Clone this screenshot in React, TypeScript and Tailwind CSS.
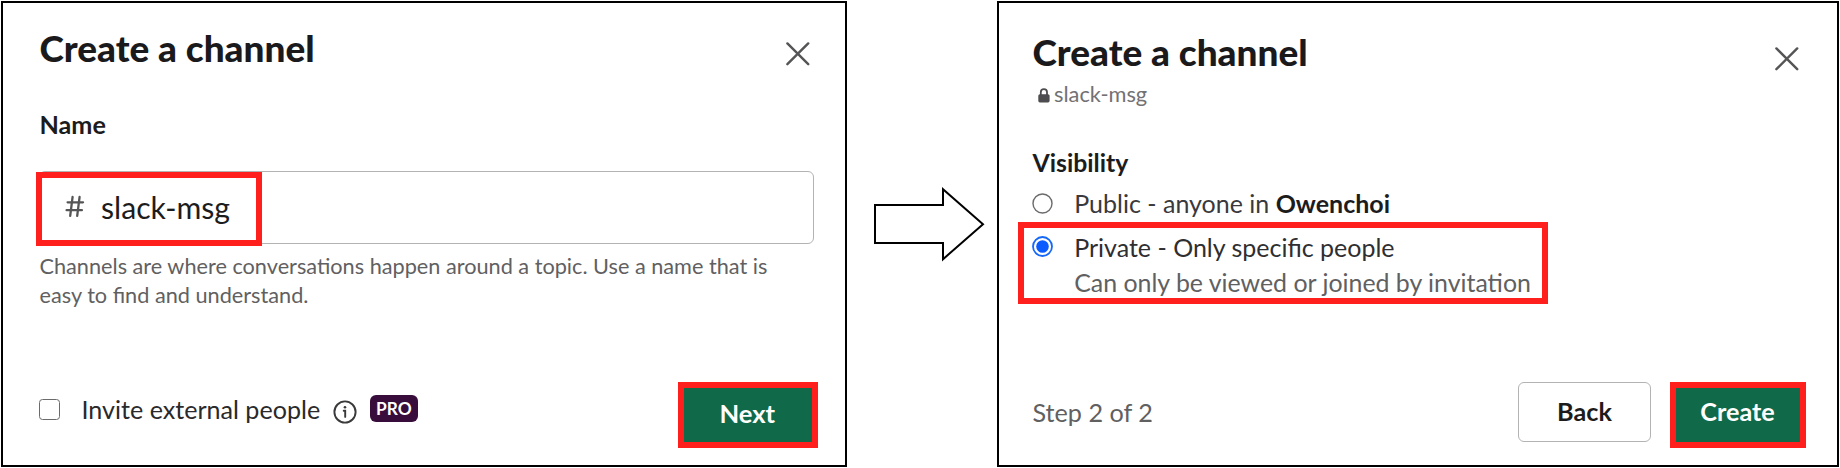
import type { ReactNode } from 'react';

function CloseIcon() {
  return (
    <svg width="24" height="24" viewBox="0 0 24 24" fill="none" stroke="#555456" strokeWidth="2.4" strokeLinecap="round">
      <path d="M1.4 1.4 22.2 22.2M22.2 1.4 1.4 22.2" />
    </svg>
  );
}

function HashIcon() {
  return (
    <svg width="20" height="23" viewBox="0 0 20 23" fill="none" stroke="#555456" strokeWidth="2.3" strokeLinecap="round">
      <path d="M7.6 1.8 5.2 20.8M14.6 1.8 12.2 20.8M2.6 7.3H18M1.6 15.2H16.9" />
    </svg>
  );
}

function InfoIcon() {
  return (
    <svg width="24" height="24" viewBox="0 0 24 24" fill="none" stroke="#3a393b" strokeWidth="1.9" strokeLinecap="round">
      <circle cx="12" cy="12" r="10.6" />
      <path d="M10.7 10.7h1.5v6.2" />
      <circle cx="12" cy="7.2" r="1.3" fill="#3a393b" stroke="none" />
    </svg>
  );
}

function LockIcon() {
  return (
    <svg width="12" height="15" viewBox="0 0 12 15">
      <path d="M2.8 7V4.2a3.1 3.1 0 0 1 6.2 0V7" fill="none" stroke="#4d4c4e" strokeWidth="1.8" />
      <rect x="0.3" y="6.2" width="11.3" height="8.2" rx="1.6" fill="#4d4c4e" />
    </svg>
  );
}

function Radio({ checked = false }: { checked?: boolean }) {
  return (
    <svg width="21" height="21" viewBox="0 0 21 21" fill="none" role="radio" aria-checked={checked}>
      <circle cx="10.5" cy="10.5" r="9.5" stroke={checked ? '#1668f5' : '#6b6a6c'} strokeWidth={checked ? 1.8 : 1.4} />
      {checked && <circle cx="10.5" cy="10.5" r="6.3" fill="#0b5cff" />}
    </svg>
  );
}

function Arrow() {
  return (
    <svg className="mt-[186px] ml-[27px] shrink-0" width="112" height="76" viewBox="0 0 112 76" fill="none" stroke="#000" strokeWidth="2">
      <path d="M1 18H69V2.2L109 37.2 69 72.2V56H1Z" />
    </svg>
  );
}

function Highlight({ className, children }: { className: string; children?: ReactNode }) {
  return <div className={`border-6 border-[#ff1f1c] ${className}`}>{children}</div>;
}

function NamePanel() {
  return (
    <section className="h-[466px] w-[846px] shrink-0 border-2 border-black bg-white pl-[36px]">
      <header className="flex justify-between pt-[25px] pr-[35.5px]">
        <h1 className="ml-[0.5px] text-[36.95px] leading-[40px] font-black text-[#1a191b]">Create a channel</h1>
        <button className="mt-[14px] h-[24px]">
          <CloseIcon />
        </button>
      </header>
      <div className="mt-[41px] ml-[0.5px] text-[25.2px] leading-[30px] font-bold text-[#1d1c1d]">Name</div>
      <div className="relative mt-[32px] h-[73px] w-[775px] rounded-[6px] border border-[#b3b3b3]">
        <Highlight className="absolute top-0 -left-[4px] flex h-[74px] w-[226px] items-start bg-white pl-[23px]">
          <span className="mt-[17px]">
            <HashIcon />
          </span>
          <span className="mt-[11px] ml-[16px] text-[30.2px] leading-[36px] whitespace-nowrap text-[#1d1c1d]">slack-msg</span>
        </Highlight>
      </div>
      <p className="mt-[7.5px] ml-[0.5px] text-[21.7px] leading-[29px] whitespace-nowrap text-[#616061]">
        Channels are where conversations happen around a topic. Use a name that is
        <br />
        easy to find and understand.
      </p>
      <footer className="mt-[72.5px] flex items-start">
        <span className="mt-[17px] h-[21px] w-[21px] rounded-[3.5px] border-[1.5px] border-[#6b6a6c]" />
        <span className="mt-[12px] ml-[21.5px] text-[25.1px] leading-[30px] text-[#2a292b]">Invite external people</span>
        <span className="mt-[17.5px] ml-[13px]">
          <InfoIcon />
        </span>
        <span className="mt-[13px] ml-[12.5px] h-[27px] w-[48.5px] rounded-[6px] bg-[#380d3b] text-center text-[17.3px] leading-[27px] font-bold text-white">PRO</span>
        <Highlight className="mr-[27px] ml-auto flex h-[66px] w-[140px] items-center justify-center bg-[#106a49] pr-[1.5px] pb-[4px] text-[25.6px] leading-[30px] font-bold text-white">
          Next
        </Highlight>
      </footer>
    </section>
  );
}

function VisibilityPanel() {
  return (
    <section className="ml-[11px] h-[466px] w-[842px] shrink-0 border-2 border-black bg-white pl-[33px]">
      <header className="flex justify-between pt-[28.5px] pr-[38px]">
        <h1 className="ml-[0.5px] text-[36.95px] leading-[40px] font-black text-[#1a191b]">Create a channel</h1>
        <button className="mt-[15px] h-[24px]">
          <CloseIcon />
        </button>
      </header>
      <div className="mt-[8px] flex items-start pl-[6px] text-[21.8px] leading-[28px] text-[#727173]">
        <span className="mt-[8px]">
          <LockIcon />
        </span>
        <span className="ml-[4px]">slack-msg</span>
      </div>
      <div className="mt-[40px] pl-[0.5px] text-[24.8px] leading-[30px] font-bold text-[#1d1c1d]">Visibility</div>
      <div className="mt-[10.5px] flex">
        <span className="mt-[5px]">
          <Radio />
        </span>
        <span className="ml-[21.2px] text-[25px] leading-[30px] whitespace-pre text-[#3a393b]">
          Public - anyone in <b className="text-[#1d1c1d]">Owenchoi</b>
        </span>
      </div>
      <Highlight className="-ml-[14px] mt-[4px] flex h-[82px] w-[530px] pl-[8px]">
        <span className="mt-[8px]">
          <Radio checked />
        </span>
        <div className="mt-[4px] ml-[21.2px] flex flex-col gap-[5px] whitespace-nowrap">
          <span className="text-[25px] leading-[30px] text-[#2f2e30]">Private - Only specific people</span>
          <span className="text-[24.9px] leading-[30px] text-[#616061]">Can only be viewed or joined by invitation</span>
        </div>
      </Highlight>
      <footer className="mt-[78px] flex items-start">
        <span className="mt-[15px] ml-[0.5px] text-[25.2px] leading-[30px] text-[#616061]">Step 2 of 2</span>
        <button className="mr-[19px] ml-auto flex h-[60px] w-[133px] items-center justify-center rounded-[6px] border border-[#b3b3b3] pb-[2px] text-[25.2px] leading-[30px] font-bold text-[#1d1c1d]">
          Back
        </button>
        <Highlight className="mr-[31px] flex h-[66px] w-[136px] items-center justify-center bg-[#106a49] pr-[1px] pb-[8px] text-[25.2px] leading-[30px] font-bold text-white">
          Create
        </Highlight>
      </footer>
    </section>
  );
}

export default function App() {
  return (
    <main className="flex h-[468px] w-[1840px] overflow-hidden bg-white p-px font-[Lato,sans-serif]">
      <NamePanel />
      <Arrow />
      <VisibilityPanel />
    </main>
  );
}
